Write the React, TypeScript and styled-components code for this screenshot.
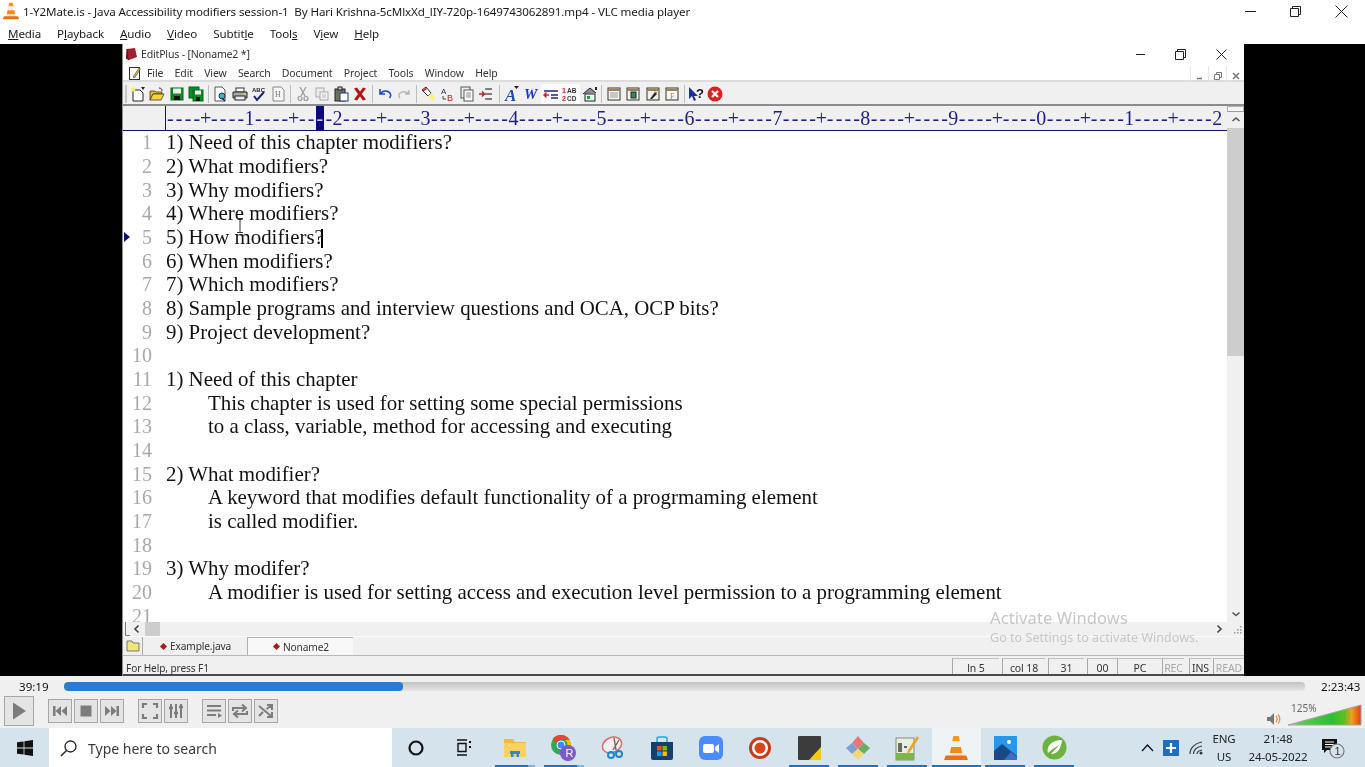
import React from "react";
import styled, { createGlobalStyle } from "styled-components";

const Global = createGlobalStyle`
  html, body { margin: 0; padding: 0; background: #000; overflow: hidden; }
  #root { width: 1365px; height: 767px; }
  * { box-sizing: border-box; }
`;

const UI = `"Noto Sans", "Open Sans", "Liberation Sans", sans-serif`;

const Page = styled.div`
  width: 1365px; height: 767px; display: flex; flex-direction: column;
  overflow: hidden; font-family: ${UI}; background: #fff; color: #111;
  filter: blur(0.4px); position: relative;
`;

/* ---------- VLC chrome ---------- */
const TitleBar = styled.div`
  height: 22px; display: flex; align-items: center; background: #fff; padding-left: 2px;
`;
const TitleText = styled.span`
  font-size: 11.6px; margin-left: 3px; letter-spacing: -0.12px; white-space: pre; color: #1a1a1a;
`;
const WinButtons = styled.div`margin-left: auto; display: flex; align-items: center;`;
const WinBtn = styled.div<{ $w: number }>`
  width: ${p => p.$w}px; display: flex; justify-content: center; align-items: center; color: #222;
`;
const MainMenu = styled.div`
  height: 22px; display: flex; align-items: center; padding-left: 8px; gap: 16px; background: #fff;
`;
const MainItem = styled.span`font-size: 11.6px; letter-spacing: -0.12px; color: #1a1a1a; white-space: pre;`;

const Video = styled.div`
  height: 632px; background: #000; padding: 0 121px 0 122px; display: flex;
`;
const EditPlus = styled.div`
  flex: 1; display: flex; flex-direction: column; background: #fff; position: relative; min-width: 0;
  border-left: 1px solid #8f8f8f;
`;
const EpTitle = styled.div`
  height: 18px; display: flex; align-items: center; padding: 2px 0 0 1px; background: #fff;
`;
const EpTitleText = styled.span`font-size: 10.6px; margin-left: 3px; color: #333; letter-spacing: -0.2px;`;
const EpWinButtons = styled.div`margin-left: auto; display: flex; margin-right: 2px;`;
const EpMenu = styled.div`
  height: 20px; display: flex; align-items: center; padding: 4px 0 0 5px; background: #fff;
  border-bottom: 2px solid #dcdcdc;
`;
const EpMenuList = styled.div`display: flex; gap: 11.2px; margin-left: 5px;`;
const EpMenuItem = styled.span`font-size: 10.5px; color: #333; letter-spacing: -0.1px;`;
const MdiButtons = styled.div`
  margin-left: auto; display: flex; align-items: center; height: 100%;
`;
const MdiBtn = styled.div`
  width: 18px; height: 15px; display: flex; justify-content: center; align-items: flex-end; padding-bottom: 1px;
  border-left: 1px solid #e6e6e6; color: #777;
`;
const Toolbar = styled.div`
  height: 24px; display: flex; align-items: center; background: #f0f0f0; padding: 2px 0 0 2px;
  border-bottom: 2px solid #8c8c8c;
`;
const Grip = styled.div`width: 2px; height: 18px; background: #c4c4c4; margin-right: 1.5px;`;
const ToolBtn = styled.div<{ $on?: boolean }>`
  width: 19.3px; height: 20px; display: flex; align-items: center; justify-content: center;
  background: ${p => (p.$on ? "#fbfbfb" : "transparent")};
`;
const ToolSep = styled.div<{ $wide?: boolean }>`
  width: 1px; height: 18px; background: #bdbdbd; margin: 0 ${p => (p.$wide ? 3 : 2)}px;
`;

const RulerRow = styled.div`
  height: 25px; display: flex; background: #f0f0f0; border-bottom: 1px solid #10106e;
  margin-right: 17px; overflow: hidden; padding-left: 43px;
`;
const RulerInner = styled.div`
  display: flex; border-left: 1px solid #10106e; height: 24px; align-items: center; margin-left: -1px;
`;
const RulerCell = styled.span<{ $mark?: boolean }>`
  width: 8.8px; flex: none; height: 24px; display: flex; justify-content: center; align-items: center;
  font-family: "Liberation Serif", serif; font-size: 20px; color: ${p => (p.$mark ? "#c8c8ee" : "#1c1c8a")};
  background: ${p => (p.$mark ? "#0a0a80" : "transparent")};
`;

const EditorBody = styled.div`height: 491px; display: flex; position: relative;`;
const TextArea = styled.div`flex: 1; overflow: hidden; background: #fff;`;
const Row = styled.div`height: 23.68px; display: flex; align-items: center; position: relative; white-space: pre;`;
const LineNo = styled.span`
  width: 43px; padding-right: 14px; flex: none; text-align: right;
  font-family: "Liberation Serif", serif; font-size: 20px; color: #a8a8a8;
`;
const Code = styled.span<{ $indent?: boolean }>`
  font-family: "Liberation Serif", serif; font-size: 20.9px; color: #111;
  padding-left: ${p => (p.$indent ? "42px" : "0")};
`;
const Caret = styled.span`
  display: inline-block; width: 2px; height: 19px; background: #000; vertical-align: -4px; margin-left: -3px;
`;
const Marker = styled.span`
  position: absolute; left: 1px; top: 6.5px; width: 0; height: 0;
  border-left: 6px solid #10106e; border-top: 5px solid transparent; border-bottom: 5px solid transparent;
`;
const IBeam = styled.div`position: absolute; left: 113px; top: 87px; color: #333; line-height: 0;`;
const VScroll = styled.div`
  width: 17px; background: #f0f0f0; display: flex; flex-direction: column; align-items: center;
  position: relative; margin-top: -25px;
`;
const RulerCap = styled.div`width: 17px; height: 6px; border: 1px solid #b4b4b4; border-bottom: 1px solid #999; background: #f4f4f4;`;
const ArrowBox = styled.div`height: 16px; display: flex; align-items: center; justify-content: center; color: #555;`;
const Thumb = styled.div`width: 17px; height: 228px; background: #cdcdcd;`;
const Fill = styled.div`flex: 1;`;

const HScroll = styled.div`
  height: 14px; display: flex; align-items: center; background: #f0f0f0; position: relative;
`;
const HCap = styled.div`width: 5px; height: 14px; border-left: 1px solid #777; border-bottom: 1px solid #777; margin-left: 2px;`;
const HThumb = styled.div`width: 15px; height: 14px; background: #cdcdcd; margin-left: 1px;`;
const HArrow = styled.div`width: 14px; display: flex; justify-content: center; color: #444;`;
const GripDots = styled.div`width: 14px; display: flex; justify-content: center; margin-left: 4px;`;

const TabBar = styled.div`
  height: 20px; display: flex; background: #f0f0f0; border-top: 1px solid #fbfbfb; border-bottom: 1px solid #b8b8b8;
`;
const FolderBox = styled.div`
  width: 20px; display: flex; align-items: center; justify-content: center; border-right: 1px solid #a8a8a8;
`;
const Tab = styled.div<{ $on?: boolean }>`
  width: ${p => (p.$on ? "106px" : "104px")}; display: flex; align-items: center; justify-content: center; gap: 4px;
  font-size: 10.2px; color: #333; letter-spacing: -0.15px; padding-left: 2px;
  background: ${p => (p.$on ? "#f8f8f8" : "transparent")};
  border-top: ${p => (p.$on ? "1px solid #b0b0b0" : "0")};
  border-left: ${p => (p.$on ? "1px solid #b0b0b0" : "0")};
`;
const Diamond = styled.i`width: 5px; height: 5px; background: #b01818; transform: rotate(45deg); display: block;`;

const StatusBar = styled.div`
  height: 20px; display: flex; align-items: flex-end; background: #f0f0f0; border-bottom: 2px solid #4a4a4a;
  padding-left: 3px; font-size: 10.5px; color: #333; letter-spacing: -0.1px;
`;
const StatusHelp = styled.span`margin-right: auto; line-height: 20px; font-size: 10.1px; height: 16px;`;
const StatusCell = styled.span<{ $w: number; $dim?: boolean; $gap?: number }>`
  width: ${p => p.$w}px; margin-right: ${p => p.$gap ?? 3}px; height: 16px; line-height: 18px; text-align: center;
  border-left: 1px solid #a8a8a8; border-top: 1px solid #c0c0c0;
  color: ${p => (p.$dim ? "#a8a8a8" : "#333")};
`;

const Watermark = styled.div`
  position: absolute; left: 867px; top: 564px; color: #c6c6c6; pointer-events: none;
`;
const WmTitle = styled.div`font-size: 16.5px; line-height: 20px; letter-spacing: 0.1px;`;
const WmSub = styled.div`font-size: 12.5px; line-height: 20px; letter-spacing: 0.04px;`;

/* ---------- player controls ---------- */
const Controls = styled.div`
  height: 52px; background: #f0f0f0; display: flex; flex-direction: column;
`;
const SeekRow = styled.div`
  height: 20px; display: flex; align-items: center; font-size: 11.6px; color: #111; padding-top: 1px;
`;
const TimeL = styled.span`width: 64px; padding-left: 19px; flex: none;`;
const TimeR = styled.span`width: 60px; padding-left: 16px; flex: none;`;
const SeekTrack = styled.div`
  flex: 1; height: 9px; border-radius: 4px; overflow: hidden;
  background: linear-gradient(#c2c2c2, #e6e6e6);
`;
const SeekFill = styled.div`height: 100%; background: #2a7cd0; border-radius: 4px;`;
const BtnRow = styled.div`flex: 1; display: flex; align-items: flex-start; padding-left: 4px;`;
const CtlBtn = styled.div<{ $big?: boolean; $gap?: number }>`
  width: ${p => (p.$big ? 30 : 24)}px; height: ${p => (p.$big ? 30 : 24)}px;
  margin-top: ${p => (p.$big ? 0 : 3)}px; margin-right: ${p => p.$gap ?? 2}px;
  border: 1px solid #a6a6a6; background: #e4e4e4; display: flex; align-items: center; justify-content: center;
  flex: none;
`;
const Volume = styled.div`
  margin-left: auto; margin-right: 4px; display: flex; align-items: flex-end; height: 30px; position: relative; gap: 7px;
`;
const VolText = styled.span`
  position: absolute; left: 24px; top: 5px; font-size: 10px; color: #666;
`;

/* ---------- taskbar ---------- */
const Taskbar = styled.div`
  height: 39px; background: #d5e4ec; display: flex; align-items: stretch;
`;
const Start = styled.div`width: 49px; display: flex; align-items: center; justify-content: center;`;
const Search = styled.div`
  width: 343px; background: #fff; display: flex; align-items: center; padding: 1px 0 0 11px; gap: 11px;
  font-size: 14px; color: #3a3a3a;
`;
const TaskPlain = styled.div<{ $w: number; $right?: number }>`
  width: ${p => p.$w}px; display: flex; align-items: center; justify-content: center; flex: none;
  padding-right: ${p => p.$right ?? 0}px;
`;
const TaskApp = styled.div<{ $on?: boolean; $line?: boolean; $part?: boolean }>`
  width: 49px; flex: none; display: flex; align-items: center; justify-content: center; position: relative;
  background: ${p => (p.$on ? "#eef3f6" : "transparent")};
  &::after {
    content: ""; position: absolute; bottom: 0; left: ${p => (p.$on ? 0 : "4.5px")}; right: ${p => (p.$on ? 0 : "4.5px")};
    height: 2px; display: ${p => (p.$line ? "block" : "none")};
    background: ${p => (p.$part ? "linear-gradient(90deg,#0a78d4 82%,#7fb4dc 82%)" : "#0a78d4")};
  }
`;
const Tray = styled.div`margin-left: auto; display: flex; align-items: center; height: 100%; padding-right: 16px;`;
const TrayBox = styled.div<{ $w: number }>`
  width: ${p => p.$w}px; display: flex; align-items: center; justify-content: center; height: 100%; flex: none;
`;
const TrayText = styled.div<{ $w: number }>`
  width: ${p => p.$w}px; flex: none; display: flex; flex-direction: column; align-items: center; justify-content: center;
  font-size: 11.5px; line-height: 18px; color: #222; letter-spacing: -0.1px;
`;

/* ---------- data ---------- */
const lines: [string, boolean][] = [
  ["1) Need of this chapter modifiers?", false],
  ["2) What modifiers?", false],
  ["3) Why modifiers?", false],
  ["4) Where modifiers?", false],
  ["5) How modifiers?", false],
  ["6) When modifiers?", false],
  ["7) Which modifiers?", false],
  ["8) Sample programs and interview questions and OCA, OCP bits?", false],
  ["9) Project development?", false],
  ["", false],
  ["1) Need of this chapter", false],
  ["This chapter is used for setting some special permissions", true],
  ["to a class, variable, method for accessing and executing", true],
  ["", false],
  ["2) What modifier?", false],
  ["A keyword that modifies default functionality of a progrmaming element", true],
  ["is called modifier.", true],
  ["", false],
  ["3) Why modifer?", false],
  ["A modifier is used for setting access and execution level permission to a programming element", true],
  ["", false],
];

const rulerChars = (() => {
  let s = "";
  for (let i = 1; i <= 13; i++) s += "----+----" + String(i % 10);
  return s.slice(0, 120).split("");
})();

/* ---------- icons ---------- */
const S = ({ children, w = 16, h = 16, vb }: { children: React.ReactNode; w?: number; h?: number; vb?: string }) => (
  <svg width={w} height={h} viewBox={vb ?? `0 0 ${w} ${h}`} style={{ display: "block", overflow: "visible" }}>{children}</svg>
);

const Cone = ({ s = 16 }: { s?: number }) => (
  <S w={s} h={s} vb="0 0 24 24">
    <path d="M9.5 1h5l1 5h-7z" fill="#f39a1e" />
    <path d="M8.5 6h7l1 5h-9z" fill="#eee" />
    <path d="M7.5 11h9l1.2 5.500H6.300z" fill="#ef8a12" />
    <path d="M6.300 16.500h11.400l.8 2.500-1 0c-2 1.500-8 1.500-10 0l-1 0z" fill="#e9e4da" />
    <path d="M2.500 19h19l1.500 4H1z" fill="#e8730c" />
  </S>
);

const tool: Record<string, React.ReactNode> = {
  new: <><path d="M3 4h7l3 3v8H3z" fill="#fff" stroke="#222" /><path d="M3.500 0l.9 2 2.100.3-1.500 1.500.4 2.200-1.900-1-1.900 1 .4-2.200L.5 2.300l2.100-.3z" fill="#f7ee62" /><path d="M11 1h4l-2 3z" fill="#222" /></>,
  open: <><path d="M1 5h5l1 1h6v2H4L1 14z" fill="#e3b72d" stroke="#44400f" strokeWidth=".8" /><path d="M1 14l3-6h11l-3 6z" fill="#f3d24a" stroke="#44400f" strokeWidth=".8" /><path d="M10 2c2 0 3 1 3 3" fill="none" stroke="#222" /></>,
  save: <><rect x="2" y="2" width="12" height="12" fill="#0d8a22" stroke="#062" /><rect x="4" y="2.500" width="8" height="5" fill="#eee" /><rect x="5" y="10" width="6" height="4" fill="#111" /></>,
  saveall: <><rect x="1" y="1" width="10" height="11" fill="#0d8a22" stroke="#062" /><rect x="5" y="4" width="10" height="11" fill="#0d8a22" stroke="#062" /><rect x="7" y="4.500" width="6" height="4" fill="#eee" /><rect x="8" y="11" width="4" height="4" fill="#111" /></>,
  preview: <><path d="M3 1h7l3 3v11H3z" fill="#fff" stroke="#555" /><circle cx="10" cy="10" r="3" fill="#3fb0b8" stroke="#136" /><path d="M10 12l3 3" stroke="#136" strokeWidth="1.500" /></>,
  print: <><rect x="4" y="2" width="8" height="4" fill="#fff" stroke="#333" /><path d="M1 6h14v6H1z" fill="#a8a8a8" stroke="#222" /><rect x="3" y="10" width="10" height="4" fill="#eee" stroke="#222" /><circle cx="12.500" cy="8" r="1" fill="#e9e23a" /></>,
  spell: <><text x="1" y="6" fontSize="6" fontFamily="Liberation Sans" fontWeight="700" fill="#222">ABC</text><path d="M3 10l3 4 7-8" fill="none" stroke="#16247a" strokeWidth="2" /></>,
  html: <><path d="M3 1h8l3 3v11H3z" fill="#f6f6f6" stroke="#888" /><text x="5" y="11" fontSize="8" fontFamily="Liberation Serif" fill="#777">H</text></>,
  cut: <><path d="M5 1l5 9M11 1L6 10" stroke="#999" strokeWidth="1.200" fill="none" /><circle cx="5" cy="12.500" r="2" fill="none" stroke="#999" strokeWidth="1.200" /><circle cx="11" cy="12.500" r="2" fill="none" stroke="#999" strokeWidth="1.200" /></>,
  copy: <><rect x="2" y="2" width="8" height="9" fill="#ececec" stroke="#aaa" /><rect x="6" y="6" width="8" height="8" fill="#f4f4f4" stroke="#aaa" /><path d="M8 9h4M8 11h4" stroke="#bbb" /></>,
  paste: <><rect x="2" y="3" width="10" height="12" fill="#70705c" stroke="#222" /><rect x="5" y="1" width="4" height="3" fill="#ccc" stroke="#222" /><rect x="7" y="7" width="8" height="8" fill="#fff" stroke="#123a88" /></>,
  del: <path d="M2 2.500l3-1 3 4 3-4 3 1-4.200 5.500 4.200 5.500-3 1-3-4-3 4-3-1L6 8z" fill="#b41616" />,
  undo: <path d="M3 3v5h5M3.500 8c2-4 8-4 10 0 .5 1 0 3-1 4" fill="none" stroke="#1d49c8" strokeWidth="1.600" />,
  redo: <path d="M13 4v4H9M13 8c-2-3-8-3-10 0-.5 1 0 3 1 4" fill="none" stroke="#b4b4b4" strokeWidth="1.400" />,
  hl: <><path d="M2 4l4-3 5 6-3 3z" fill="#fff" stroke="#222" /><path d="M2.500 4.500L6 2 7 3 3.500 5.500z" fill="#b41616" /><path d="M8 10l3-3 4 4v3l-3 1z" fill="#f7f08a" /></>,
  rep: <><text x="1" y="8" fontSize="8" fontFamily="Liberation Sans" fill="#23237a">A</text><text x="7" y="15" fontSize="9" fontFamily="Liberation Sans" fill="#c02020">B</text><path d="M3 10v3h3" fill="none" stroke="#444" /></>,
  clip: <><rect x="2" y="1" width="9" height="11" fill="#eee" stroke="#555" /><rect x="5" y="4" width="9" height="11" fill="#fff" stroke="#555" /><path d="M7 7h5M7 9h5M7 11h5" stroke="#888" /></>,
  num: <><path d="M1 8h5M4 5.500L6.500 8 4 10.500" fill="none" stroke="#c02020" strokeWidth="1.400" /><path d="M9 3h5M9 8h5M9 13h5" stroke="#555" strokeWidth="1.400" /><path d="M8 2v2M8 7v2M8 12v2" stroke="#222" /></>,
  fontA: <><text x="1" y="15" fontSize="17" fontFamily="Liberation Serif" fontStyle="italic" fontWeight="700" fill="#1d49a8">A</text><path d="M10 0h5l-2.500 3z" fill="#222" /></>,
  fontW: <text x="0" y="13" fontSize="15" fontFamily="Liberation Serif" fontStyle="italic" fontWeight="700" fill="#1d3ab8">W</text>,
  wrap: <><path d="M1 9h5M3.500 6.500L1 9l2.500 2.500" fill="none" stroke="#c02020" strokeWidth="1.400" /><path d="M1 5h14M8 9h7M8 12h7" stroke="#1a2a6a" strokeWidth="1.400" /></>,
  ab: <><text x="0" y="7" fontSize="7" fontFamily="Liberation Sans" fontWeight="700" fill="#c02020">1</text><text x="0" y="14.500" fontSize="7" fontFamily="Liberation Sans" fontWeight="700" fill="#c02020">2</text><text x="5" y="7" fontSize="6.500" fontFamily="Liberation Sans" fontWeight="700" fill="#333">AB</text><text x="5" y="14.500" fontSize="6.500" fontFamily="Liberation Sans" fontWeight="700" fill="#333">CD</text></>,
  house: <><path d="M1 8l7-6 6 5" fill="#889" stroke="#222" /><rect x="3" y="8" width="10" height="7" fill="#dfe" stroke="#222" /><rect x="5" y="10" width="3" height="3" fill="#2a9a3a" /><path d="M13 1h2v3h-2z" fill="#222" /></>,
  win1: <><rect x="2" y="2" width="12" height="12" fill="#f6f6ee" stroke="#333" /><path d="M2 4h12" stroke="#a08050" strokeWidth="2" /><path d="M4 7h8M4 9h8M4 11h8" stroke="#999" /></>,
  win2: <><rect x="2" y="2" width="12" height="12" fill="#f6f6ee" stroke="#333" /><path d="M2 4h12" stroke="#a08050" strokeWidth="2" /><rect x="6" y="6" width="5" height="6" fill="#385" stroke="#222" /></>,
  win3: <><rect x="2" y="2" width="12" height="12" fill="#f0f0e6" stroke="#333" /><path d="M2 4h12" stroke="#a08050" strokeWidth="2" /><path d="M5 13l5-7 2 2-5 5z" fill="#222" /><path d="M9 5l3 1 0 3z" fill="#a86" /></>,
  win4: <><rect x="2" y="2" width="12" height="12" fill="#f6f6ee" stroke="#333" /><path d="M2 4h12" stroke="#a08050" strokeWidth="2" /><text x="6" y="12.500" fontSize="8" fontFamily="Liberation Serif" fill="#888">F</text></>,
  help: <><path d="M1 1v12l3-3 2 5 2-1-2-4h4z" fill="#1a2e9a" /><text x="8" y="12" fontSize="13" fontFamily="Liberation Sans" fontWeight="700" fill="#111">?</text></>,
  close: <><circle cx="8" cy="8" r="7.500" fill="#e0201c" /><path d="M5 5l6 6M11 5l-6 6" stroke="#fff" strokeWidth="2.200" /></>,
};
const TB = ({ n, on }: { n: string; on?: boolean }) => (
  <ToolBtn $on={on}><S>{tool[n]}</S></ToolBtn>
);

const Min = ({ w = 11 }: { w?: number }) => <S w={w} h={11}><path d={`M0 5.500h${w}`} stroke="currentColor" /></S>;
const Res = () => <S w={11} h={11}><path d="M.5 2.500h8v8h-8zM2.500 2.500v-2h8v8h-2" fill="none" stroke="currentColor" /></S>;
const X = ({ s = 13 }: { s?: number }) => <S w={s} h={s}><path d={`M.5 .5L${s - .5} ${s - .5}M${s - .5} .5L.5 ${s - .5}`} stroke="currentColor" /></S>;
const Chev = ({ d }: { d: "u" | "d" | "l" | "r" }) => {
  const p = { u: "M1.500 6L5 3l3.500 3", d: "M1.500 3.500L5 6.500l3.500-3", l: "M6.500 1.500L3 5l3.500 3.500", r: "M3.500 1.500L7 5 3.500 8.500" }[d];
  return <S w={10} h={10}><path d={p} fill="none" stroke="currentColor" strokeWidth="1.600" /></S>;
};

const G = "#7c7c7c";
const ctl: Record<string, React.ReactNode> = {
  play: <path d="M4 1.500l13 8.500-13 8.500z" fill={G} />,
  prev: <path d="M2 4h2.500v10H2zM10 4v10L4.500 9zM16 4v10L10.500 9z" fill={G} />,
  stop: <rect x="3.500" y="3.500" width="11" height="11" fill={G} />,
  next: <path d="M16 4h-2.500v10H16zM8 4v10l5.500-5zM2 4v10l5.500-5z" fill={G} />,
  full: <path d="M2 6V2h4M12 2h4v4M16 12v4h-4M6 16H2v-4" fill="none" stroke={G} strokeWidth="2.200" />,
  ext: <><path d="M4 2v14M9 2v14M14 2v14" stroke={G} strokeWidth="2" /><path d="M2 6h4M7 11h4M12 5h4" stroke={G} strokeWidth="2.600" /></>,
  list: <><path d="M2 4h14M2 8.500h14M2 13h9" stroke={G} strokeWidth="2.200" /><path d="M13 11l4 2.500-4 2.500z" fill={G} /></>,
  loop: <path d="M2 9V6h12M11 2.500L15 6l-4 3.500M16 9v3H4M7 8.500L3 12l4 3.500" fill="none" stroke={G} strokeWidth="2" />,
  rand: <path d="M2 4l12 10M2 14l4-4M9.500 7L14 4M10 3h5v5M10 15h5v-5" fill="none" stroke={G} strokeWidth="2" />,
};
const Ctl = ({ n, big, gap }: { n: string; big?: boolean; gap?: number }) => (
  <CtlBtn $big={big} $gap={gap}><S w={big ? 20 : 18} h={big ? 20 : 18}>{ctl[n]}</S></CtlBtn>
);

const apps: { k: string; on?: boolean; line?: boolean; part?: boolean; el: React.ReactNode }[] = [
  { k: "files", line: true, part: true, el: <S w={24} h={24}><path d="M1 3h9l2 3h11v15H1z" fill="#f4b93c" /><path d="M1 7h22v14H1z" fill="#fad263" /><path d="M8 21v-6h8v6h-2.500v-3h-3v3z" fill="#2c89d8" /><path d="M7 15h10v3H7z" fill="#2c89d8" /></S> },
  { k: "chrome", line: true, part: true, el: <S w={28} h={28}><circle cx="11" cy="11" r="10" fill="#34a853" /><path d="M11 1a10 10 0 0 1 8.700 5H11a5 5 0 0 0-4.500 2.800L2.500 5A10 10 0 0 1 11 1z" fill="#ea4335" /><path d="M19.700 6A10 10 0 0 1 12 21l4-7a5 5 0 0 0-1-8z" fill="#fbbc05" /><circle cx="11" cy="11" r="4" fill="#4285f4" stroke="#fff" /><circle cx="18" cy="19" r="8" fill="#7a5ac8" /><text x="15.500" y="23" fontSize="11" fontFamily="Liberation Sans" fill="#fff">R</text></S> },
  { k: "snip", el: <S w={26} h={26}><ellipse cx="12" cy="10" rx="10" ry="7.500" fill="#fbeeee" stroke="#dc6a6a" strokeWidth="1.500" transform="rotate(-25 12 10)" /><path d="M14 3l2 12M19 5l-6 10" stroke="#666" strokeWidth="1.400" /><circle cx="11" cy="20" r="3" fill="none" stroke="#1f86c8" strokeWidth="2" /><circle cx="19" cy="19" r="3" fill="none" stroke="#1f86c8" strokeWidth="2" /></S> },
  { k: "store", el: <S w={24} h={26}><path d="M1 7h22v16a2 2 0 0 1-2 2H3a2 2 0 0 1-2-2z" fill="#14406e" /><path d="M7 7V4a2 2 0 0 1 2-2h6a2 2 0 0 1 2 2v3" fill="none" stroke="#2aa0dc" strokeWidth="1.500" /><rect x="7" y="11" width="4.500" height="4.500" fill="#f25022" /><rect x="12.500" y="11" width="4.500" height="4.500" fill="#7fba00" /><rect x="7" y="16.500" width="4.500" height="4.500" fill="#00a4ef" /><rect x="12.500" y="16.500" width="4.500" height="4.500" fill="#ffb900" /></S> },
  { k: "zoom", el: <S w={24} h={24}><rect width="24" height="24" rx="6" fill="#4a8cff" /><rect x="4" y="8" width="11" height="9" rx="2" fill="#fff" /><path d="M16 11l4-3v9l-4-3z" fill="#fff" /></S> },
  { k: "rec", el: <S w={24} h={24}><circle cx="12" cy="12" r="11" fill="#c83a1a" /><circle cx="12" cy="12" r="8" fill="#fff" /><circle cx="12" cy="12" r="5.500" fill="#d8441e" /></S> },
  { k: "sticky", line: true, el: <S w={23} h={24}><rect width="23" height="24" rx="1" fill="#3c3c3c" /><path d="M23 11v13H11z" fill="#f6c90e" /></S> },
  { k: "diamond", line: true, el: <S w={26} h={26}><path d="M13 1l6 7-6 6-6-6z" fill="#e87878" /><path d="M19 8l6 5-6 6-6-5z" fill="#68ae5c" /><path d="M7 8l6 6-6 5-6-6z" fill="#7e9ed8" /><path d="M13 14l6 5-6 6-6-6z" fill="#f2d870" /></S> },
  { k: "notepad", line: true, el: <S w={24} h={26}><rect x="1" y="3" width="18" height="22" fill="#e8f0dc" stroke="#888" /><rect x="1" y="18" width="18" height="7" fill="#7ab648" /><path d="M4 8v9M6 8v9M9 12h3" stroke="#333" strokeWidth="1.400" /><path d="M22 1l-9 14-1 4 3-2L24 3z" fill="#e8a62a" /></S> },
  { k: "vlc", on: true, line: true, el: <Cone s={26} /> },
  { k: "photos", line: true, el: <S w={23} h={24}><rect width="23" height="24" fill="#2a96e8" /><path d="M0 24V15l8-7 15 12v4z" fill="#174a86" /><path d="M10 24l7-8 6 5v3z" fill="#3f6cc4" /><circle cx="15" cy="6" r="2" fill="#fff" /></S> },
  { k: "spring", line: true, el: <S w={25} h={25}><circle cx="12.500" cy="12.500" r="12" fill="#6db33f" /><path d="M6 18c-2-7 4-13 14-13-1 8-4 14-11 14 2-3 5-5 8-9-3 2-7 4-11 8z" fill="#fff" /></S> },
];

export default function App() {
  return (
    <Page>
      <Global />
      <TitleBar>
        <Cone s={18} />
        <TitleText>1-Y2Mate.is - Java Accessibility modifiers session-1  By Hari Krishna-5cMlxXd_lIY-720p-1649743062891.mp4 - VLC media player</TitleText>
        <WinButtons>
          <WinBtn $w={46}><Min /></WinBtn>
          <WinBtn $w={45}><Res /></WinBtn>
          <WinBtn $w={47}><X /></WinBtn>
        </WinButtons>
      </TitleBar>
      <MainMenu>
        <MainItem><u>M</u>edia</MainItem>
        <MainItem>P<u>l</u>ayback</MainItem>
        <MainItem><u>A</u>udio</MainItem>
        <MainItem><u>V</u>ideo</MainItem>
        <MainItem>Subtit<u>l</u>e</MainItem>
        <MainItem>Tool<u>s</u></MainItem>
        <MainItem>V<u>i</u>ew</MainItem>
        <MainItem><u>H</u>elp</MainItem>
      </MainMenu>
      <Video>
        <EditPlus>
          <EpTitle>
            <S w={14} h={14}><path d="M3 2l8-1 2 9-8 3-3-2z" fill="#a02030" /><path d="M2 11l3 2" stroke="#222" /><path d="M3 2v9" stroke="#400" /></S>
            <EpTitleText>EditPlus - [Noname2 *]</EpTitleText>
            <EpWinButtons>
              <WinBtn $w={40}><Min w={9} /></WinBtn>
              <WinBtn $w={40}><Res /></WinBtn>
              <WinBtn $w={42}><X s={11} /></WinBtn>
            </EpWinButtons>
          </EpTitle>
          <EpMenu>
            <S w={14} h={15}><rect x="1.500" y="1.500" width="10" height="12" fill="#fff" stroke="#333" /><path d="M5 11l6-9 1.500 1-6 9z" fill="#d8c040" stroke="#333" strokeWidth=".6" /></S>
            <EpMenuList>
              {["File", "Edit", "View", "Search", "Document", "Project", "Tools", "Window", "Help"].map(m => <EpMenuItem key={m}>{m}</EpMenuItem>)}
            </EpMenuList>
            <MdiButtons>
              <MdiBtn><S w={7} h={7}><path d="M1 5.500h5" stroke="currentColor" strokeWidth="1.500" /></S></MdiBtn>
              <MdiBtn><S w={8} h={8}><path d="M.5 2.500h5v5h-5zM2.500 2V.5h5v5H6" fill="none" stroke="currentColor" /></S></MdiBtn>
              <MdiBtn><S w={8} h={8}><path d="M1 1l6 6M7 1L1 7" stroke="currentColor" strokeWidth="1.500" /></S></MdiBtn>
            </MdiButtons>
          </EpMenu>
          <Toolbar>
            <Grip />
            {["new", "open", "save", "saveall"].map(n => <TB key={n} n={n} />)}
            <ToolSep />
            {["preview", "print", "spell", "html"].map(n => <TB key={n} n={n} />)}
            <ToolSep />
            {["cut", "copy", "paste", "del"].map(n => <TB key={n} n={n} />)}
            <ToolSep />
            {["undo", "redo"].map(n => <TB key={n} n={n} />)}
            <ToolSep />
            {["hl", "rep", "clip", "num"].map(n => <TB key={n} n={n} />)}
            <ToolSep $wide />
            <TB n="fontA" /><TB n="fontW" /><TB n="wrap" on /><TB n="ab" on /><TB n="house" />
            <ToolSep />
            {["win1", "win2", "win3", "win4"].map(n => <TB key={n} n={n} />)}
            <ToolSep />
            <TB n="help" /><TB n="close" />
          </Toolbar>
          <RulerRow>
            <RulerInner>
              {rulerChars.map((c, i) => <RulerCell key={i} $mark={i === 17}>{c}</RulerCell>)}
            </RulerInner>
          </RulerRow>
          <EditorBody>
            <TextArea>
              {lines.map(([t, ind], i) => (
                <Row key={i}>
                  {i === 4 && <Marker />}
                  <LineNo>{i + 1}</LineNo>
                  <Code $indent={ind}>{t}{i === 4 && <Caret />}</Code>
                </Row>
              ))}
            </TextArea>
            <IBeam><S w={8} h={15}><path d="M1 .5h6M4 .5v14M1 14.500h6" stroke="currentColor" fill="none" /></S></IBeam>
            <VScroll>
              <RulerCap />
              <ArrowBox><Chev d="u" /></ArrowBox>
              <Thumb />
              <Fill />
              <ArrowBox><Chev d="d" /></ArrowBox>
            </VScroll>
          </EditorBody>
          <HScroll>
            <HCap />
            <HArrow><Chev d="l" /></HArrow>
            <HThumb />
            <Fill />
            <HArrow><Chev d="r" /></HArrow>
            <GripDots><S w={9} h={9}><path d="M7 1h1.500v1.500H7zM4 4h1.500v1.500H4zM7 4h1.500v1.500H7zM1 7h1.500v1.500H1zM4 7h1.500v1.500H4zM7 7h1.500v1.500H7z" fill="#999" /></S></GripDots>
          </HScroll>
          <TabBar>
            <FolderBox><S w={14} h={12}><path d="M1 1h5l1 2h6v8H1z" fill="#f2e67a" stroke="#777" /></S></FolderBox>
            <Tab><Diamond />Example.java</Tab>
            <Tab $on><Diamond />Noname2</Tab>
          </TabBar>
          <StatusBar>
            <StatusHelp>For Help, press F1</StatusHelp>
            <StatusCell $w={47}>ln 5</StatusCell>
            <StatusCell $w={43}>col 18</StatusCell>
            <StatusCell $w={36}>31</StatusCell>
            <StatusCell $w={30} $gap={0}>00</StatusCell>
            <StatusCell $w={45} $gap={0}>PC</StatusCell>
            <StatusCell $w={22} $gap={5} $dim>REC</StatusCell>
            <StatusCell $w={22} $gap={2}>INS</StatusCell>
            <StatusCell $w={31} $gap={0} $dim>READ</StatusCell>
          </StatusBar>
          <Watermark>
            <WmTitle>Activate Windows</WmTitle>
            <WmSub>Go to Settings to activate Windows.</WmSub>
          </Watermark>
        </EditPlus>
      </Video>
      <Controls>
        <SeekRow>
          <TimeL>39:19</TimeL>
          <SeekTrack><SeekFill style={{ width: `${(339 / 1241) * 100}%` }} /></SeekTrack>
          <TimeR>2:23:43</TimeR>
        </SeekRow>
        <BtnRow>
          <Ctl n="play" big gap={14} />
          <Ctl n="prev" /><Ctl n="stop" /><Ctl n="next" gap={14} />
          <Ctl n="full" /><Ctl n="ext" gap={14} />
          <Ctl n="list" /><Ctl n="loop" /><Ctl n="rand" />
          <Volume>
            <S w={14} h={14}><path d="M0 5h3l4-4v12l-4-4H0z" fill="#777" /><path d="M9 4c1.500 2 1.500 4 0 6M11 2.500c2.500 3 2.500 6 0 9" fill="none" stroke="#f09030" strokeWidth="1.300" /></S>
            <S w={73} h={22} vb="0 0 73 22">
              <defs>
                <linearGradient id="vol" x1="0" x2="1" y1="0" y2="0">
                  <stop offset="0" stopColor="#b8d8b0" />
                  <stop offset=".15" stopColor="#5ccc50" />
                  <stop offset=".6" stopColor="#2cc030" />
                  <stop offset=".78" stopColor="#60c020" />
                  <stop offset=".87" stopColor="#f0a020" />
                  <stop offset="1" stopColor="#e04010" />
                </linearGradient>
              </defs>
              <path d="M0 21L73 1v20z" fill="url(#vol)" stroke="#a4a4a4" />
            </S>
            <VolText>125%</VolText>
          </Volume>
        </BtnRow>
      </Controls>
      <Taskbar>
        <Start><S w={16} h={16}><path d="M0 2.300L6.600 1.400v6.200H0zM7.400 1.300L16 0v7.600H7.400zM0 8.400h6.600v6.200L0 13.700zM7.400 8.400H16V16l-8.600-1.300z" fill="#111" /></S></Start>
        <Search>
          <S w={17} h={17}><circle cx="10.500" cy="6.500" r="5.500" fill="none" stroke="#222" strokeWidth="1.300" /><path d="M6.500 10.500L1 16" stroke="#222" strokeWidth="1.500" /></S>
          Type here to search
        </Search>
        <TaskPlain $w={48}><S w={16} h={16}><circle cx="8" cy="8" r="6.500" fill="none" stroke="#111" strokeWidth="2.200" /></S></TaskPlain>
        <TaskPlain $w={50.5} $right={4}><S w={17} h={17}><path d="M2 1h10M2 16h10M3 4.500h8v8H3z" fill="none" stroke="#111" strokeWidth="1.400" /><path d="M14 2h2v2h-2zM14 7h2v2h-2z" fill="#111" /></S></TaskPlain>
        {apps.map(a => <TaskApp key={a.k} $on={a.on} $line={a.line} $part={a.part}>{a.el}</TaskApp>)}
        <Tray>
          <TrayBox $w={24}><S w={13} h={8}><path d="M1 7l5.500-6L12 7" fill="none" stroke="#111" strokeWidth="1.300" /></S></TrayBox>
          <TrayBox $w={24}><S w={16} h={16}><rect width="16" height="16" fill="#1e6fc0" /><path d="M3 8h10M8 3v10" stroke="#fff" strokeWidth="2.200" /></S></TrayBox>
          <TrayBox $w={26}><S w={14} h={14}><path d="M1 13C1 7 6 2 13 1M4.500 13c0-4 3.500-7 8.500-8M8 13c0-2 2-3.500 5-4" fill="none" stroke="#333" strokeWidth="1.100" /><circle cx="12" cy="12" r="1.500" fill="#333" /></S></TrayBox>
          <TrayText $w={30}><span>ENG</span><span>US</span></TrayText>
          <TrayText $w={78}><span>21:48</span><span>24-05-2022</span></TrayText>
          <TrayBox $w={32}>
            <S w={24} h={22}>
              <path d="M1 2h15v11H6l-3 3v-3H1z" fill="#111" /><path d="M4 5h9M4 7.500h9M4 10h6" stroke="#fff" />
              <circle cx="16" cy="14" r="7" fill="#d5e4ec" stroke="#777" strokeWidth="1.200" />
              <text x="13.500" y="18" fontSize="11" fontFamily="Liberation Sans" fill="#333">1</text>
            </S>
          </TrayBox>
        </Tray>
      </Taskbar>
    </Page>
  );
}
